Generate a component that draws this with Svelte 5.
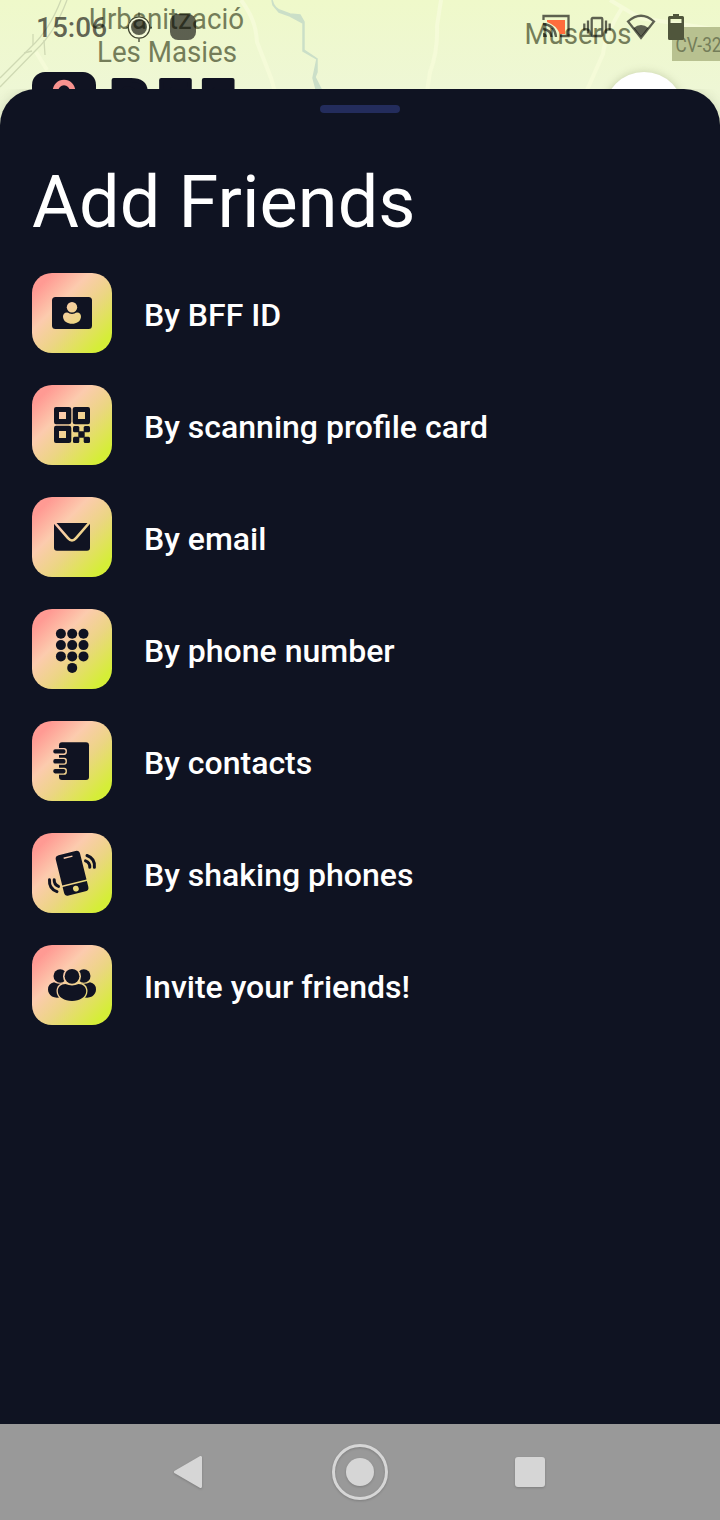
<script lang="ts">
  // Bottom sheet listing the ways to add a friend, over the map screen.
  type Icon = 'id' | 'qr' | 'email' | 'dialpad' | 'contacts' | 'shake' | 'people';

  const options: { icon: Icon; label: string }[] = [
    { icon: 'id', label: 'By BFF ID' },
    { icon: 'qr', label: 'By scanning profile card' },
    { icon: 'email', label: 'By email' },
    { icon: 'dialpad', label: 'By phone number' },
    { icon: 'contacts', label: 'By contacts' },
    { icon: 'shake', label: 'By shaking phones' },
    { icon: 'people', label: 'Invite your friends!' }
  ];

  const dots = [24.7, 36.1, 47.4].flatMap((y) => [28.9, 40.2, 51.5].map((x) => ({ x, y })));
  const rings = [30.4, 40.3, 50.2];
</script>

<main class="screen">
  <svg class="map" viewBox="0 0 720 130" aria-hidden="true">
    <defs>
      <linearGradient id="land" x1="0" y1="0" x2="0" y2="1">
        <stop offset="0" stop-color="#eff9ca" />
        <stop offset="1" stop-color="#eef6da" />
      </linearGradient>
      <filter id="soft" x="-30%" y="-30%" width="160%" height="160%"><feGaussianBlur stdDeviation="4" /></filter>
    </defs>
    <rect width="720" height="130" fill="url(#land)" />
    <g fill="none" stroke="#f5fbd8" stroke-width="4">
      <path d="M241 0C252 15 256 26 257 42L271 78L275 92" />
      <path d="M441 0L437 26Q438 51 430 72L427 92" />
      <path d="M622 8Q605 35 603 54L587 90M610 0L640 18L720 30" />
      <path d="M36 52L47 70" />
    </g>
    <g fill="none" stroke="#cfd9b3" stroke-width="1.3">
      <path d="M61 0C52 23 43 36 31 47L0 78M67 0C58 24 48 39 36 50L0 87" />
      <path d="M33 34V45M44 40L45 55M24 53L32 51" />
    </g>
    <path d="M272 0Q274 9 282 11L290 14L300 15L304 22V50L317 59V72L315 77L321 89H316L313 78L317 59L303 51V23L290 16L279 12L273 5Z" fill="#cbdfc8" stroke="#cbdfc8" stroke-width="1.5" />
    <rect x="672" y="27" width="48" height="34" fill="#b8c190" />
    <g class="places">
      <text x="89" y="28.5" font-size="29.5" textLength="155" lengthAdjust="spacingAndGlyphs">Urbanització</text>
      <text x="97" y="62" font-size="29.5" textLength="140" lengthAdjust="spacingAndGlyphs">Les Masies</text>
      <text x="524.5" y="43.5" font-size="29.5" textLength="107" lengthAdjust="spacingAndGlyphs">Museros</text>
      <text x="675.5" y="52" font-size="20" textLength="46" lengthAdjust="spacingAndGlyphs">CV-32</text>
    </g>
    <rect x="32" y="72" width="64" height="50" rx="13" fill="#101322" />
    <circle cx="64" cy="91" r="8.5" fill="none" stroke="#f8928f" stroke-width="5.5" />
    <text class="logo" x="111" y="120.5" textLength="123" lengthAdjust="spacing">BFF</text>
    <circle cx="644" cy="113" r="41" fill="#98a27b" opacity=".45" filter="url(#soft)" />
    <circle cx="644" cy="112" r="40" fill="#fff" />
  </svg>

  <header class="status">
    <div class="left">
      <span class="time">15:06</span>
      <svg width="28" height="32" viewBox="0 0 28 32">
        <circle cx="14" cy="16.5" r="9.7" fill="none" stroke="#f6fbdc" stroke-width="3" />
        <path d="M14 1.500V5.500M14 27.500V31M1.500 16.500H3.500M24.500 16.500H27" stroke="#41462f" stroke-width="1.300" />
        <circle cx="14" cy="16.500" r="10.700" fill="none" stroke="#41462f" stroke-width="1.200" />
        <circle cx="14" cy="16" r="8" fill="currentColor" />
      </svg>
      <i class="app"></i>
    </div>
    <div class="right">
      <svg width="28" height="26" viewBox="0 0 28 26">
        <path d="M5 6H23V20H18Q14 11 5 8Z" fill="#ff6c3d" />
        <path d="M1.500 6V2H26.500V22H18" fill="none" stroke="currentColor" stroke-width="2.300" />
        <path d="M1 10Q13 11 14 23M1 15Q9 16 9.500 23" fill="none" stroke="currentColor" stroke-width="2.300" />
        <path d="M1 19Q5 19 5 23H1Z" fill="currentColor" />
      </svg>
      <svg class="vibrate" width="28" height="22" viewBox="0 0 28 22" fill="none" stroke="currentColor" stroke-width="2.300">
        <rect x="8.700" y="2" width="10.600" height="18" rx="1" />
        <path d="M5 4.500V17.500M23 4.500V17.500M1.300 7.500V14.500M26.700 7.500V14.500" />
      </svg>
      <svg class="wifi" width="30" height="26" viewBox="0 0 30 26">
        <path d="M2 7.500Q15-4 28 7.500L15 24Z" fill="none" stroke="currentColor" stroke-width="2.300" />
        <path d="M7.500 14Q15 8 22.500 14L15 23Z" fill="currentColor" />
      </svg>
      <svg class="battery" width="16" height="26" viewBox="0 0 16 26" fill="#50563c">
        <path fill-rule="evenodd" d="M5 0H11V2H14.500Q16 2 16 3.500V24.500Q16 26 14.500 26H1.500Q0 26 0 24.500V3.500Q0 2 1.500 2H5ZM2.500 5V9H13.500V5Z" />
      </svg>
    </div>
  </header>

  <section class="sheet">
    <div class="handle"></div>
    <h1>Add Friends</h1>
    <ul>
      {#each options as option (option.icon)}
        <li>
          <span class="tile">
            <svg viewBox="0 0 80 80" width="80" height="80" fill="#101322" aria-hidden="true">
              {#if option.icon === 'id'}
                <mask id="id-cut">
                  <rect width="80" height="80" fill="#fff" />
                  <path d="M35 39.500H45C47.600 39.500 49.200 41.500 49 44C48.500 48.500 44.500 50.800 40 50.800S31.500 48.500 31 44C30.800 41.500 32.400 39.500 35 39.500Z" fill="#000" />
                  <circle cx="40" cy="34.300" r="6.700" fill="#fff" />
                  <circle cx="40" cy="34.300" r="5.200" fill="#000" />
                </mask>
                <rect x="20" y="24" width="40" height="32" rx="3.500" mask="url(#id-cut)" />
              {:else if option.icon === 'qr'}
                <path
                  fill-rule="evenodd"
                  d="M24 22H37Q39.300 22 39.300 24V37Q39.300 39.300 37 39.300H24Q22 39.300 22 37V24Q22 22 24 22ZM27 27V34H34V27ZM43 22H56Q58 22 58 24V37Q58 39.300 56 39.300H43Q40.700 39.300 40.700 37V24Q40.700 22 43 22ZM46 27V34H53V27ZM24 40.700H37Q39.300 40.700 39.300 43V56Q39.300 58 37 58H24Q22 58 22 56V43Q22 40.700 24 40.700ZM27 46V53H34V46Z"
                />
                <rect x="41" y="41" width="6.300" height="6.300" rx="1.500" />
                <rect x="51.700" y="41" width="6.300" height="6.300" rx="1.500" />
                <rect x="46.300" y="46.300" width="6.400" height="6.400" rx=".8" />
                <rect x="41" y="51.700" width="6.300" height="6.300" rx="1.500" />
                <rect x="51.700" y="51.700" width="6.300" height="6.300" rx="1.500" />
              {:else if option.icon === 'email'}
                <mask id="email-cut">
                  <rect width="80" height="80" fill="#fff" />
                  <path d="M22 25L36 41.200Q40 45.800 44 41.200L58 25" fill="none" stroke="#000" stroke-width="2.600" />
                </mask>
                <path d="M22 26H58V50.700Q58 53.700 55 53.700H25Q22 53.700 22 50.700Z" mask="url(#email-cut)" />
              {:else if option.icon === 'dialpad'}
                {#each dots as dot}
                  <circle cx={dot.x} cy={dot.y} r="5" />
                {/each}
                <circle cx="40.200" cy="58.900" r="5" />
              {:else if option.icon === 'contacts'}
                <mask id="book-cut">
                  <rect width="80" height="80" fill="#fff" />
                  {#each rings as y}
                    <rect x="19" y={y - 3.5} width="15.900" height="7" rx="2.800" fill="#000" />
                  {/each}
                </mask>
                <rect x="27" y="21.200" width="30" height="37.800" rx="3" mask="url(#book-cut)" />
                {#each rings as y}
                  <rect x="21.300" y={y - 2.2} width="12.200" height="4.400" rx="1.800" />
                {/each}
              {:else if option.icon === 'shake'}
                <g transform="rotate(-14 40 40)">
                  <path
                    fill-rule="evenodd"
                    d="M31.300 19.500H48.700Q52.500 19.500 52.500 23.300V49.800H27.500V23.300Q27.500 19.500 31.300 19.500ZM35.500 23V24.500H44.500V23Z"
                  />
                  <path
                    fill-rule="evenodd"
                    d="M27.500 51.300H52.500V57.200Q52.500 61 48.700 61H31.300Q27.500 61 27.500 57.200ZM40 53.200A2.900 2.900 0 1 0 40 59A2.900 2.900 0 1 0 40 53.200Z"
                  />
                </g>
                <g fill="none" stroke="#101322" stroke-width="3" stroke-linecap="round">
                  <path d="M53.500 27.800Q58 29.500 57.800 34.300M55 22.500Q63.200 25.500 62.400 34.300" />
                  <path d="M22.200 46.800Q22 51.700 26.500 53.400M17.500 46.800Q16.800 55.600 25 58.600" />
                </g>
              {:else}
                <mask id="people-cut">
                  <rect width="80" height="80" fill="#fff" />
                  <circle cx="40" cy="31.300" r="9" fill="#000" />
                  <path d="M33 37.700H47C52 37.700 55.500 41 55.500 46C55.500 53 48.500 57.500 40 57.500S24.500 53 24.500 46C24.500 41 28 37.700 33 37.700Z" fill="#000" />
                </mask>
                <g mask="url(#people-cut)">
                  <circle cx="28.200" cy="31" r="6.700" />
                  <circle cx="51.800" cy="31" r="6.700" />
                  <path d="M22 37.300Q28 40 31 38L29 52Q24 53.500 20 51.500Q16 48.500 16 44.500Q16 38.500 22 37.300Z" />
                  <path d="M58 37.300Q52 40 49 38L51 52Q56 53.500 60 51.500Q64 48.500 64 44.500Q64 38.500 58 37.300Z" />
                </g>
                <circle cx="40" cy="31.300" r="7.400" />
                <path d="M33.500 39Q40 41.800 46.500 39C51 39 54.200 42 54.200 46C54.200 52.200 47.500 56 40 56S25.800 52.200 25.800 46C25.800 42 29 39 33.500 39Z" />
              {/if}
            </svg>
          </span>
          <span class="label">{option.label}</span>
        </li>
      {/each}
    </ul>
  </section>

  <nav>
    <span>
      <svg width="32" height="36" viewBox="2 0 32 36">
        <path d="M3.500 18L28.500 3.500V32.500Z" fill="#d6d6d6" stroke="#d6d6d6" stroke-width="3" stroke-linejoin="round" />
      </svg>
    </span>
    <span>
      <svg width="60" height="60" viewBox="0 0 60 60">
        <circle cx="30" cy="30" r="26.500" fill="none" stroke="#d6d6d6" stroke-width="3" />
        <circle cx="30" cy="30" r="14" fill="#d6d6d6" />
      </svg>
    </span>
    <span><i class="recents"></i></span>
  </nav>
</main>

<style>
  :global(body) {
    margin: 0;
    background: #0f1322;
  }
  .screen {
    position: relative;
    display: flex;
    flex-direction: column;
    width: 720px;
    height: 1520px;
    overflow: hidden;
    font-family: Roboto, sans-serif;
    color: #fff;
  }
  .map {
    position: absolute;
    top: 0;
    left: 0;
    width: 720px;
    height: 130px;
  }
  .places {
    fill: #747d59;
  }
  .logo {
    font-family: Inter, sans-serif;
    font-size: 56px;
    font-weight: 900;
    fill: #101322;
    stroke: #101322;
    stroke-width: 4;
    stroke-linejoin: round;
  }
  .status {
    position: relative;
    box-sizing: border-box;
    display: flex;
    justify-content: space-between;
    flex: none;
    height: 89px;
    padding: 10px 36px 0 36px;
    color: rgba(0, 0, 0, 0.61);
  }
  .left,
  .right {
    display: flex;
    align-items: center;
    height: 33px;
  }
  .time {
    width: 89px;
    padding-top: 1px;
    font-size: 28px;
    font-weight: 500;
    line-height: 33px;
  }
  .app {
    width: 26px;
    height: 26px;
    margin-left: 17px;
    border-radius: 8px;
    background: currentColor;
  }
  .vibrate {
    margin-left: 13px;
  }
  .wifi {
    margin-left: 15px;
  }
  .battery {
    margin-left: 12px;
  }
  .sheet {
    position: relative;
    flex: 1;
    padding: 16px 32px 0;
    border-radius: 36px 36px 0 0;
    background: #0f1322;
    box-shadow: 0 0 12px rgba(70, 80, 50, 0.18);
    clip-path: inset(0);
  }
  .handle {
    width: 80px;
    height: 8px;
    margin: 0 auto;
    border-radius: 4px;
    background: #232c5c;
  }
  h1 {
    margin: 48px 0 0;
    font-size: 72px;
    font-weight: 400;
    letter-spacing: 0.1px;
    line-height: 84px;
  }
  ul {
    display: flex;
    flex-direction: column;
    gap: 32px;
    margin: 28px 0 0;
    padding: 0;
    list-style: none;
  }
  li {
    display: flex;
    align-items: center;
    gap: 32px;
  }
  .tile {
    width: 80px;
    height: 80px;
    border-radius: 20px;
    background: linear-gradient(135deg, #ff9a93 13%, #fccbae 36%, #ecd584 58%, #d5ee37 88%);
  }
  .tile svg {
    display: block;
  }
  .label {
    padding-top: 4px;
    font-size: 32px;
    font-weight: 500;
    line-height: 38px;
  }
  nav {
    position: relative;
    display: flex;
    justify-content: center;
    flex: none;
    height: 96px;
    background: #999;
  }
  nav span {
    display: flex;
    align-items: center;
    justify-content: center;
    width: 170px;
    filter: drop-shadow(0 1px 1px rgba(0, 0, 0, 0.18));
  }
  .recents {
    width: 30px;
    height: 30px;
    border-radius: 3px;
    background: #d6d6d6;
  }
</style>
